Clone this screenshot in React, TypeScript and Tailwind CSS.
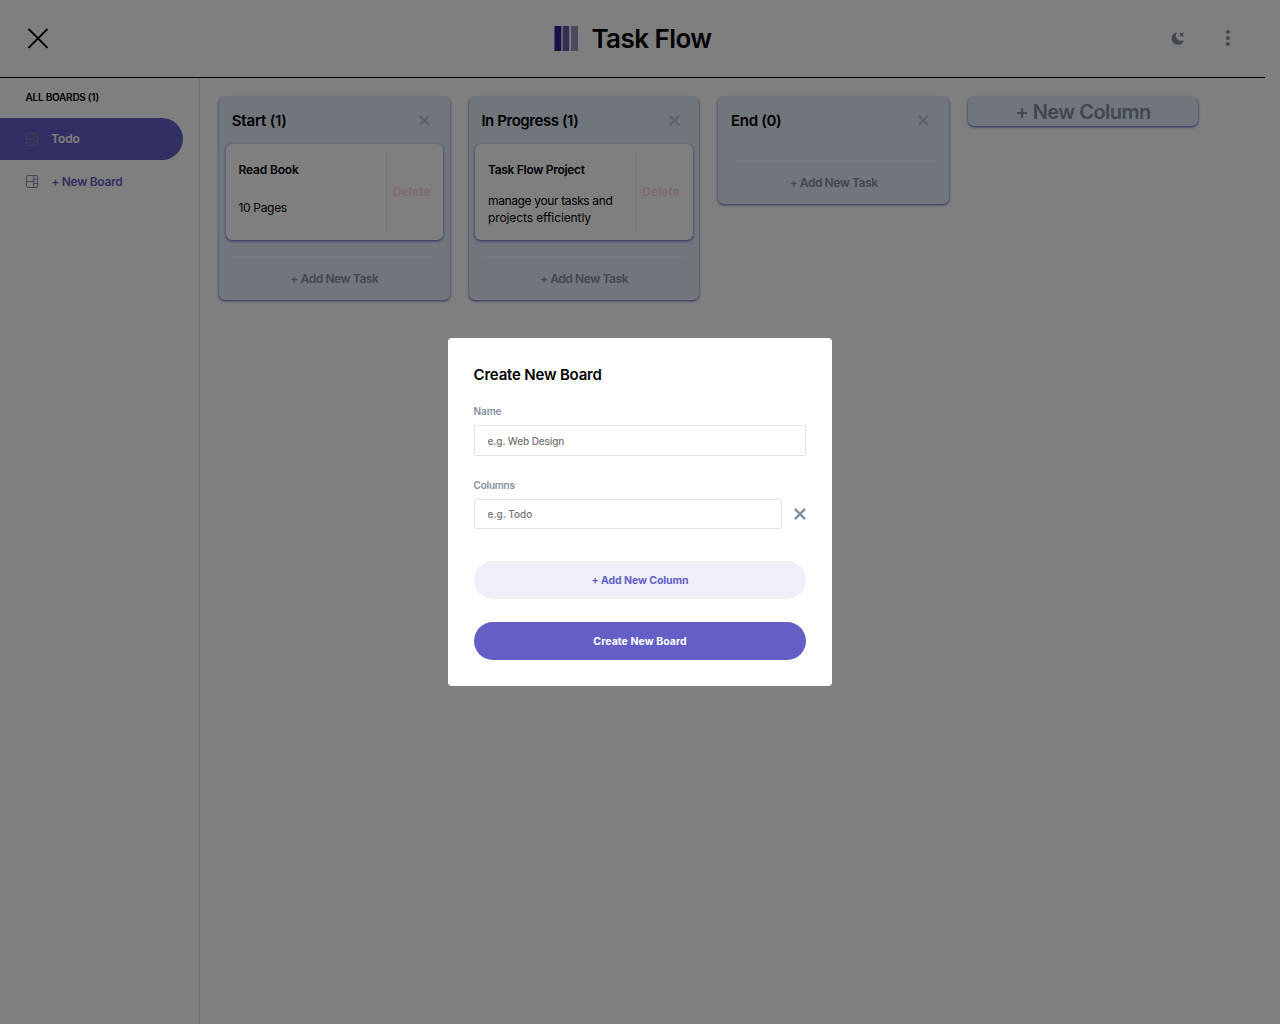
import React from "react";

function BoardIcon({ className }: { className: string }) {
  return (
    <svg viewBox="0 0 13 13" className={"size-[13px] shrink-0 " + className} fill="none" stroke="currentColor" strokeWidth="1">
      <rect x="0.5" y="0.5" width="11.2" height="12" rx="1.8" />
      <path d="M7.8 0.5V12.5M0.5 6.5H7.8M7.8 4.4H11.7M7.8 8.6H11.7" />
    </svg>
  );
}

function Cross({ className }: { className: string }) {
  return (
    <svg viewBox="0 0 15 15" className={className} fill="currentColor">
      <path d="m12.728 0 2.122 2.122L2.122 14.85 0 12.728z" />
      <path d="M0 2.122 2.122 0 14.85 12.728l-2.122 2.122z" />
    </svg>
  );
}

type Task = { title: string; titleClass: string; lines: string[]; lineClass: string; bodyClass: string };

function TaskCard({ task }: { task: Task }) {
  return (
    <div className="mx-[6.8px] flex h-24 items-center rounded-md bg-white pl-[12.6px] pr-[12.8px] shadow-[0_1px_3px_0_#635fc7,0_1px_2px_-1px_#635fc7]">
      <div className="flex h-[77px] grow flex-col border-r border-[#e4ebfa]">
        <h3 className={"mt-[6px] text-[12px] leading-5 font-semibold whitespace-nowrap " + task.titleClass}>{task.title}</h3>
        <div className={"flex h-[56px] flex-col justify-center text-[12px] leading-[17px] " + task.bodyClass}>
          {task.lines.map((l) => (
            <p key={l} className={"whitespace-nowrap " + task.lineClass}>{l}</p>
          ))}
        </div>
      </div>
      <button className="ml-[6px] text-[12px] font-semibold tracking-[0.05px] text-[#ffd6d8]">Delete</button>
    </div>
  );
}

function Column({ title, titleClass, task }: { title: string; titleClass: string; task?: Task }) {
  return (
    <section className="w-[230.8px] rounded-md bg-[#e2ebf8] pb-[10px] shadow-[0_1px_3px_0_#635fc7,0_1px_2px_-1px_#635fc7]">
      <div className="flex h-[47px] items-center justify-between pr-[19.6px] pl-[12.8px]">
        <h2 className={"pt-px text-[15px] font-semibold whitespace-nowrap " + titleClass}>{title}</h2>
        <Cross className="size-[11px] text-[#bdc4d2]" />
      </div>
      {task && <TaskCard task={task} />}
      <div className="mx-[13px] mt-4 border-t border-[#f2f2f4]" />
      <button className="mt-[11px] block h-[22px] w-full text-center text-[12px] font-semibold tracking-[-0.43px] text-[#828fa3]">+ Add New Task</button>
    </section>
  );
}

export default function App() {
  return (
    <div className="relative h-[1024px] w-[1280px] overflow-hidden bg-white font-['Inter',sans-serif] text-black">
      <header className="flex h-[78px] w-[1265px] items-center justify-between border-b border-black pr-[35px] pb-px pl-[26px]">
        <svg viewBox="0 0 24 24" className="size-6" fill="none" stroke="black" strokeWidth="2">
          <path d="M2.5 2.9l19 19M21.5 2.9l-19 19" />
        </svg>
        <div className="ml-[45px] flex items-center gap-[13px]">
          <svg viewBox="0 0 24 25" className="h-[25px] w-6">
            <rect x="0.5" width="6.8" height="25" fill="#32218c" />
            <rect x="8.7" width="6.5" height="25" fill="#6c5ba6" />
            <rect x="17" width="7" height="25" fill="#9e93c0" />
          </svg>
          <h1 className="pt-[2px] text-[26px] leading-8 font-semibold tracking-[-0.55px] whitespace-nowrap">Task Flow</h1>
        </div>
        <div className="flex items-center gap-[41px] text-[#828fa3]">
          <svg viewBox="0 0 16 16" className="size-[13px]" fill="currentColor">
            <path d="M6.474.682c.434-.11.718.406.481.78A6.067 6.067 0 0 0 6.01 4.72c0 3.418 2.827 6.187 6.314 6.187.89.002 1.77-.182 2.584-.54.408-.18.894.165.724.57-1.16 2.775-3.944 4.73-7.194 4.73-4.292 0-7.771-3.41-7.771-7.615 0-3.541 2.466-6.518 5.807-7.37Zm8.433.07c.442-.294.969.232.674.674l-.525.787a1.943 1.943 0 0 0 0 2.157l.525.788c.295.441-.232.968-.674.673l-.787-.525a1.943 1.943 0 0 0-2.157 0l-.786.525c-.442.295-.97-.232-.675-.673l.525-.788a1.943 1.943 0 0 0 0-2.157l-.525-.787c-.295-.442.232-.968.674-.673l.787.525a1.943 1.943 0 0 0 2.157 0Z" />
          </svg>
          <svg viewBox="0 0 5 20" className="h-4 w-[5px] overflow-visible" fill="currentColor">
            <circle cx="3" cy="2.4" r="2.5" />
            <circle cx="3" cy="10" r="2.5" />
            <circle cx="3" cy="17.6" r="2.5" />
          </svg>
        </div>
      </header>

      <div className="flex h-[946px]">
        <aside className="w-[200px] border-r border-[#e4e4e7]">
          <p className="mt-[11px] ml-[25.6px] text-[10px] leading-4 font-semibold tracking-[-0.25px]">ALL BOARDS (1)</p>
          <div className="mt-[13px] flex h-[42px] w-[183px] items-center gap-[12.2px] rounded-r-full bg-[#635fc7] pl-[26px] text-[12px] font-semibold text-white">
            <BoardIcon className="text-[#828fa3]/80" />
            <span className="tracking-[-0.15px]">Todo</span>
          </div>
          <div className="flex h-[43px] items-center gap-[12.2px] pl-[26px] text-[12px] font-semibold text-[#635fc7]">
            <BoardIcon className="text-[#828fa3]" />
            <span className="tracking-[-0.28px]">+ New Board</span>
          </div>
        </aside>

        <main className="flex items-start gap-[18.8px] pt-[19px] pl-[19px]">
          <Column
            title="Start (1)"
            titleClass="tracking-[-0.2px]"
            task={{ title: "Read Book", titleClass: "tracking-[-0.15px]", lines: ["10 Pages"], lineClass: "tracking-[-0.3px]", bodyClass: "pt-[5px]" }}
          />
          <Column
            title="In Progress (1)"
            titleClass="tracking-[-0.43px]"
            task={{ title: "Task Flow Project", titleClass: "tracking-[-0.3px]", lines: ["manage your tasks and", "projects efficiently"], lineClass: "tracking-[-0.36px] last:tracking-[-0.1px]", bodyClass: "pt-[8px]" }}
          />
          <Column title="End (0)" titleClass="tracking-[-0.3px]" />
          <button className="h-[29px] w-[230.4px] rounded-md bg-[#e2ebf8] pt-px text-[20px] leading-[28px] font-semibold tracking-[-0.5px] text-[#828fa3] shadow-[0_1px_3px_0_#635fc7,0_1px_2px_-1px_#635fc7]">+ New Column</button>
        </main>
      </div>

      <div className="absolute inset-0 flex items-center justify-center bg-black/50">
        <form className="h-[348px] w-[384px] rounded bg-white px-[25.6px] pt-[27px]">
          <h2 className="text-[15px] leading-5 font-semibold tracking-[-0.2px]">Create New Board</h2>
          <label className="mt-[19px] block text-[10px] leading-[14px] font-semibold tracking-[-0.15px] text-[#828fa3]">Name</label>
          <input className="mt-[6.5px] block h-[31px] w-full rounded-[3px] border border-[#dfe1e7] px-[13px] pt-[2px] text-[10px] font-medium tracking-[-0.1px] placeholder:text-[#757575]" placeholder="e.g. Web Design" />
          <label className="mt-[22px] block text-[10px] leading-[14px] font-semibold tracking-[-0.25px] text-[#828fa3]">Columns</label>
          <div className="mt-[7px] flex items-center justify-between">
            <input className="h-[30px] w-[308.5px] rounded-[3px] border border-[#dfe1e7] px-[13px] text-[10px] font-medium placeholder:text-[#757575]" placeholder="e.g. Todo" />
            <Cross className="size-[12px] text-[#828fa3]" />
          </div>
          <button type="button" className="mt-8 block h-[38px] w-full rounded-full bg-[#efeffa] pt-[2px] text-[10.5px] font-bold tracking-[-0.07px] text-[#635fc7]">+ Add New Column</button>
          <button type="button" className="mt-[23px] block h-[38px] w-full rounded-full bg-[#635fc7] pt-[2px] text-[10.5px] font-bold tracking-[0.05px] text-white">Create New Board</button>
        </form>
      </div>
    </div>
  );
}
